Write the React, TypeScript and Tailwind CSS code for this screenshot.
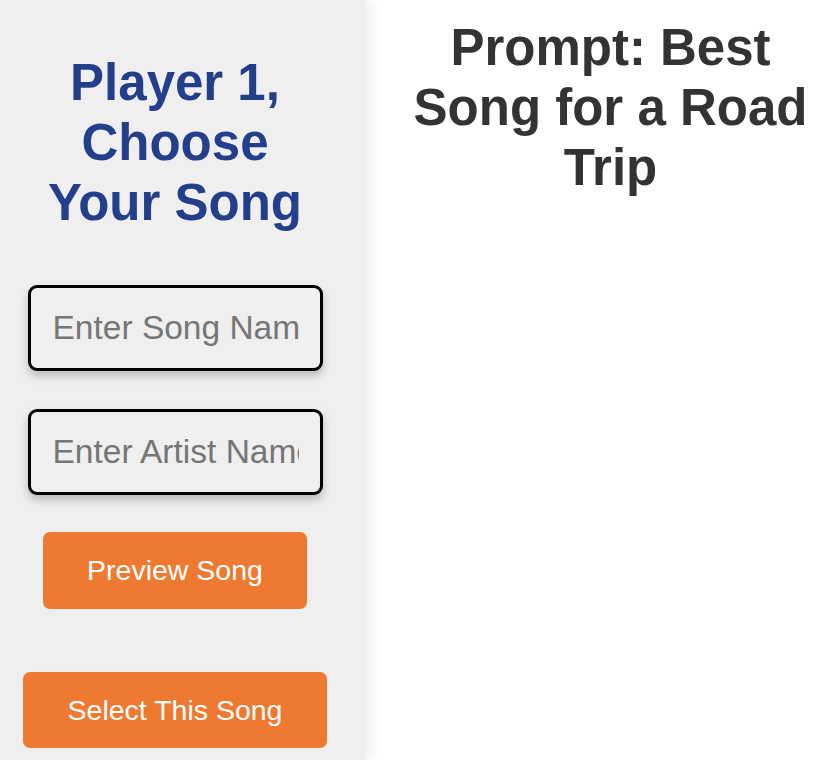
import React from "react";

export default function App() {
  return (
    <div
      className="flex h-[760px] w-full overflow-hidden bg-white"
      style={{ fontFamily: '"Liberation Sans", Arial, sans-serif' }}
    >
      <aside className="relative z-10 h-full w-[366px] shrink-0 bg-[#efefef] pr-[16px] shadow-[3px_0_14px_rgba(0,0,0,0.09)]">
        <div className="flex w-[350px] flex-col items-center">
          <h1 className="mt-[53px] w-[300px] text-center text-[51px] font-bold leading-[60px] text-[#233e8b]">
            Player 1, Choose Your Song
          </h1>
          <input
            type="text"
            placeholder="Enter Song Name"
            className="mt-[52px] h-[86px] w-[295px] rounded-[9px] border-[3px] border-black bg-[#efefef] pl-[22px] pr-[21px] text-[33.5px] text-[#333] shadow-[0_5px_8px_rgba(0,0,0,0.22)] outline-none placeholder:text-[#767676]"
          />
          <input
            type="text"
            placeholder="Enter Artist Name"
            className="mt-[38px] h-[86px] w-[295px] rounded-[9px] border-[3px] border-black bg-[#efefef] pl-[22px] pr-[21px] text-[33.5px] text-[#333] shadow-[0_5px_8px_rgba(0,0,0,0.22)] outline-none placeholder:text-[#767676]"
          />
          <button className="mt-[37px] h-[77px] w-[264px] rounded-[7px] bg-[#ee7a31] text-[28.5px] text-white">
            Preview Song
          </button>
          <button className="mt-[63px] h-[76px] w-[304px] rounded-[7px] bg-[#ee7a31] text-[28.5px] text-white">
            Select This Song
          </button>
        </div>
      </aside>
      <main className="flex-1 pl-[30px]">
        <h2 className="mt-[18px] text-center text-[51px] font-bold leading-[60px] text-[#333333]">
          Prompt: Best Song for a Road Trip
        </h2>
      </main>
    </div>
  );
}
